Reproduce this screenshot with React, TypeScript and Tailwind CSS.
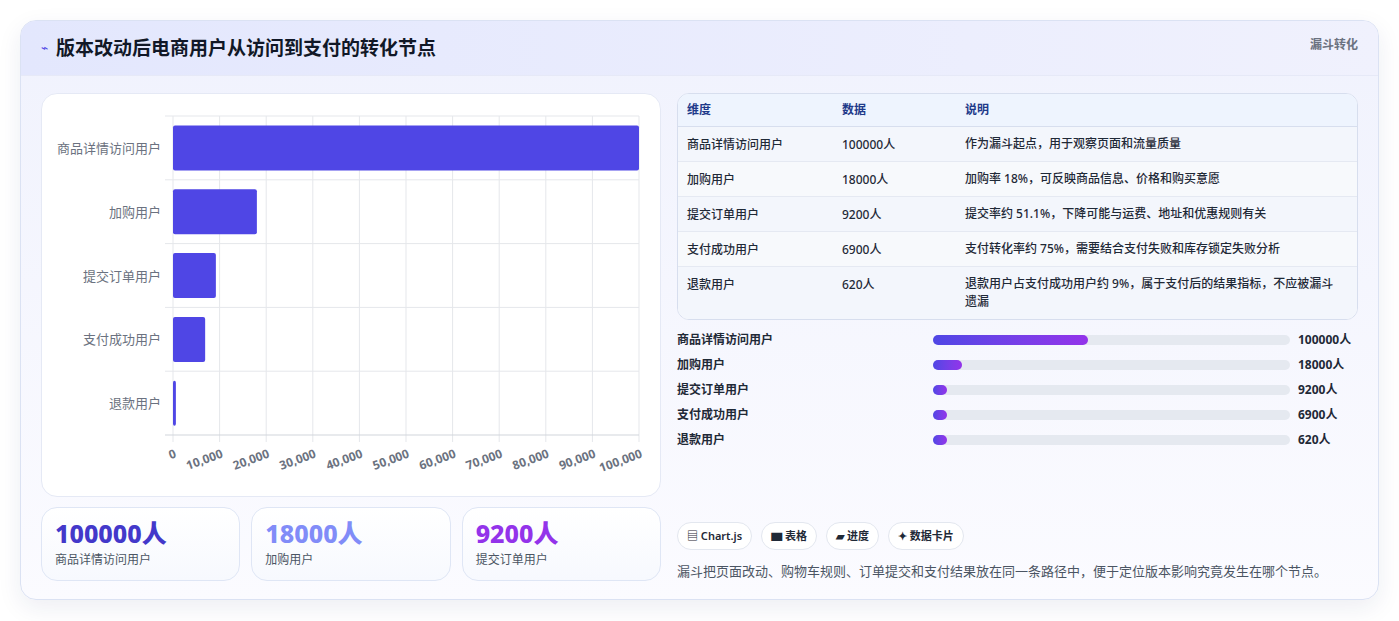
import React from 'react';

const font = { fontFamily: '"Noto Sans", "Noto Sans CJK SC", sans-serif' };

const rows = [
  { name: '商品详情访问用户', v: 100000, desc: '作为漏斗起点，用于观察页面和流量质量', pct: '43.5%' },
  { name: '加购用户', v: 18000, desc: '加购率 18%，可反映商品信息、价格和购买意愿', pct: '8%' },
  { name: '提交订单用户', v: 9200, desc: '提交率约 51.1%，下降可能与运费、地址和优惠规则有关', pct: '4%' },
  { name: '支付成功用户', v: 6900, desc: '支付转化率约 75%，需要结合支付失败和库存锁定失败分析', pct: '4%' },
  { name: '退款用户', v: 620, desc: '退款用户占支付成功用户约 9%，属于支付后的结果指标，不应被漏斗遗漏', pct: '4%' },
];

const Chart = () => {
  const x0 = 131, x1 = 597, y0 = 22, y1 = 341;
  const band = (y1 - y0) / 5;
  const sx = (v: number) => x0 + ((x1 - x0) * v) / 100000;
  return (
    <svg width="618" height="402" className="block">
      {Array.from({ length: 11 }).map((_, i) => (
        <line key={i} x1={sx(i * 10000)} x2={sx(i * 10000)} y1={y0} y2={y1 + 7} stroke="#e5e7eb" />
      ))}
      {Array.from({ length: 6 }).map((_, i) => (
        <line key={i} x1={x0 - 8} x2={x1} y1={y0 + i * band} y2={y0 + i * band} stroke={i === 5 ? '#d1d5db' : '#e5e7eb'} />
      ))}
      {rows.map((r, i) => (
        <g key={r.name}>
          <rect x={x0} y={y0 + i * band + 9.5} width={Math.max(sx(r.v) - x0, 2)} height={45} rx={2} fill="#4f46e5" />
          <text x={119} y={y0 + i * band + band / 2 + 5} textAnchor="end" fontSize="13" fill="#6b7280" style={font}>{r.name}</text>
        </g>
      ))}
      {Array.from({ length: 11 }).map((_, i) => (
        <text key={i} x={sx(i * 10000) + 4} y={y1 + 22} textAnchor="end" fontSize="12" fontWeight="700" fill="#6b7280"
          transform={`rotate(-20 ${sx(i * 10000) + 4} ${y1 + 22})`} style={font}>
          {(i * 10000).toLocaleString('en-US')}
        </text>
      ))}
    </svg>
  );
};

export default function App() {
  const stats = [
    { v: '100000人', l: '商品详情访问用户', c: 'text-[#4338ca]' },
    { v: '18000人', l: '加购用户', c: 'text-[#818cf8]' },
    { v: '9200人', l: '提交订单用户', c: 'text-[#9333ea]' },
  ];
  return (
    <div className="w-[1399px] h-[621px] bg-white p-5" style={font}>
      <div className="h-[580px] rounded-2xl border border-[#dbe2f3] shadow-[0_8px_24px_rgba(30,41,99,0.08)] bg-gradient-to-b from-[#f0f2fd] to-[#fbfbff] overflow-hidden">
        <div className="h-[55px] flex items-center justify-between pl-5 pr-5 bg-gradient-to-r from-[#e3e7fd] to-[#f0f1fd] border-b border-[#e6e9f7]">
          <div className="flex items-center gap-2">
            <span className="text-[#4f46e5] text-xs">⌁</span>
            <h1 className="text-[19px] font-bold text-[#111827]">版本改动后电商用户从访问到支付的转化节点</h1>
          </div>
          <span className="self-start mt-4 text-xs font-semibold text-[#6b7280]">漏斗转化</span>
        </div>
        <div className="flex gap-4 px-5 pt-[17px]">
          <div className="w-[620px] flex flex-col gap-[10px]">
            <div className="h-[404px] bg-white rounded-2xl border border-[#e5e9f5]">
              <Chart />
            </div>
            <div className="grid grid-cols-3 gap-[11px]">
              {stats.map(s => (
                <div key={s.l} className="h-[74px] rounded-2xl border border-[#dfe6f5] bg-gradient-to-b from-white to-[#f7f9fe] px-[13px] pt-2">
                  <div className={`text-[25px] font-extrabold leading-[34px] ${s.c}`}>{s.v}</div>
                  <div className="text-xs text-[#4b5563] mt-[2px]">{s.l}</div>
                </div>
              ))}
            </div>
          </div>
          <div className="flex-1 flex flex-col">
            <div className="rounded-xl border border-[#d7deee] overflow-hidden bg-white text-xs">
              <div className="flex h-[33px] items-center bg-[#eef4fe] text-[#1e3a8a] font-semibold border-b border-[#d7deee]">
                <div className="w-[164px] pl-[9px]">维度</div>
                <div className="w-[123px]">数据</div>
                <div className="flex-1">说明</div>
              </div>
              {rows.map((r, i) => (
                <div key={r.name} className={`flex items-start pt-[10px] ${i === 4 ? 'h-[52px]' : 'h-[35px] border-b border-[#e5e9f2]'} ${i % 2 ? 'bg-[#f7f9fc]' : 'bg-[#f3f6fc]'} text-[#1f2937] font-medium`}>
                  <div className="w-[164px] pl-[9px]">{r.name}</div>
                  <div className="w-[123px]">{r.v}人</div>
                  <div className="flex-1 pr-3 leading-[18px] -mt-[2px]">{r.desc}</div>
                </div>
              ))}
            </div>
            <div className="flex flex-col gap-[7px] mt-[11px] text-xs font-semibold text-[#1f2937]">
              {rows.map(r => (
                <div key={r.name} className="flex items-center h-[18px]">
                  <div className="w-[256px]">{r.name}</div>
                  <div className="w-[357px] h-[10px] rounded-full bg-[#e5e9f0]">
                    <div className="h-full rounded-full bg-gradient-to-r from-[#4f46e5] to-[#9333ea]" style={{ width: r.pct }} />
                  </div>
                  <div className="ml-2 font-bold">{r.v}人</div>
                </div>
              ))}
            </div>
            <div className="mt-[73px] flex gap-[9px]">
              {['▤ Chart.js', '▆ 表格', '▰ 进度', '✦ 数据卡片'].map(t => (
                <span key={t} className="h-[28px] px-[9px] flex items-center rounded-full border border-[#e3e7ef] bg-white text-[11px] font-semibold text-[#1f2937]">{t}</span>
              ))}
            </div>
            <p className="mt-[12px] text-[13px] text-[#4b5563]">漏斗把页面改动、购物车规则、订单提交和支付结果放在同一条路径中，便于定位版本影响究竟发生在哪个节点。</p>
          </div>
        </div>
      </div>
    </div>
  );
}
